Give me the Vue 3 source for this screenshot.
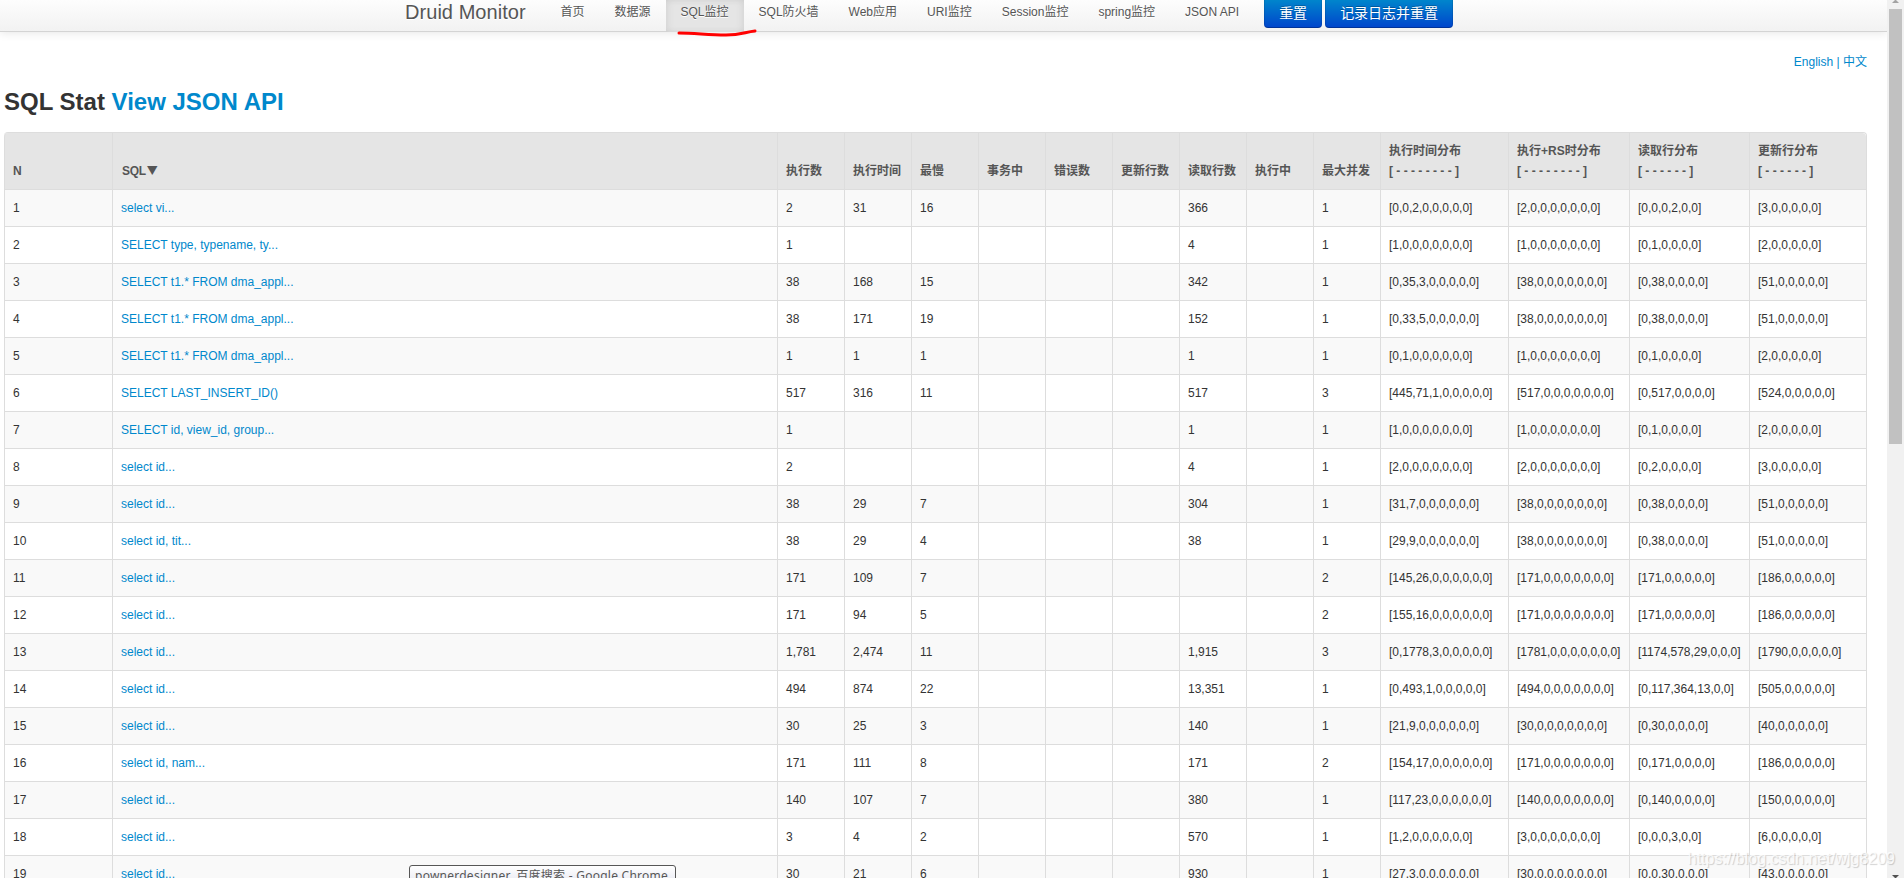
<template>
  <div class="window">
    <div class="page">
      <div class="navbar">
        <div class="navbar-inner">
          <a class="brand">Druid Monitor</a>
          <ul class="nav">
            <li v-for="item in menu" :key="item" :class="{ active: item === current }">
              <a>{{ item }}</a>
            </li>
          </ul>
          <div class="actions">
            <button type="button" class="btn">重置</button>
            <button type="button" class="btn">记录日志并重置</button>
          </div>
        </div>
      </div>

      <div class="container">
        <div class="lang"><a>English</a> | <a>中文</a></div>
        <h3>SQL Stat <a>View JSON API</a></h3>

        <table class="table">
          <colgroup>
            <col class="col-n">
            <col class="col-sql">
            <col v-for="n in 9" :key="n" class="col-num">
            <col class="col-time">
            <col class="col-rs">
            <col class="col-fetch">
            <col class="col-update">
          </colgroup>
          <thead>
            <tr>
              <th>N</th>
              <th class="sorted">SQL<span class="sort">▼</span></th>
              <th v-for="name in numberHeads" :key="name">{{ name }}</th>
              <th v-for="head in histogramHeads" :key="head.name">
                {{ head.name }}<br>{{ head.range }}
              </th>
            </tr>
          </thead>
          <tbody>
            <tr v-for="(row, i) in rows" :key="i">
              <td>{{ i + 1 }}</td>
              <td><a>{{ row[0] }}</a></td>
              <td>{{ row[1] }}</td>
              <td>{{ row[2] }}</td>
              <td>{{ row[3] }}</td>
              <td></td>
              <td></td>
              <td></td>
              <td>{{ row[4] }}</td>
              <td></td>
              <td>{{ row[5] }}</td>
              <td>[{{ row[6] }}]</td>
              <td>[{{ row[7] }}]</td>
              <td>[{{ row[8] }}]</td>
              <td>[{{ row[9] }}]</td>
            </tr>
          </tbody>
        </table>
      </div>
    </div>

    <div class="scrollbar">
      <svg class="arrow" width="17" height="9" viewBox="0 0 17 9">
        <path d="M5 3h7L8.500 -0.500z" fill="#a3a3a3" />
      </svg>
      <div class="thumb"></div>
      <svg class="arrow down" width="17" height="3" viewBox="0 0 17 3">
        <path d="M5 0h7L8.500 3.500z" fill="#505050" />
      </svg>
    </div>

    <svg class="marker" width="90" height="14" viewBox="0 0 90 14">
      <path d="M4 5C20 5 33 7 51 7C66 7 70 4 80 3" />
    </svg>
    <div class="tooltip">pownerdesigner_百度搜索 - Google Chrome</div>
    <div class="watermark">https://blog.csdn.net/wjg8209</div>
  </div>
</template>

<script setup>
import { ref } from 'vue'

const current = ref('SQL监控')

const menu = [
  '首页',
  '数据源',
  'SQL监控',
  'SQL防火墙',
  'Web应用',
  'URI监控',
  'Session监控',
  'spring监控',
  'JSON API'
]

const numberHeads = [
  '执行数',
  '执行时间',
  '最慢',
  '事务中',
  '错误数',
  '更新行数',
  '读取行数',
  '执行中',
  '最大并发'
]

const histogramHeads = [
  { name: '执行时间分布', range: '[ - - - - - - - - ]' },
  { name: '执行+RS时分布', range: '[ - - - - - - - - ]' },
  { name: '读取行分布', range: '[ - - - - - - ]' },
  { name: '更新行分布', range: '[ - - - - - - ]' }
]

// sql, executions, total time, slowest, fetched rows, max concurrent, histograms
const rows = [
  ['select vi...', '2', '31', '16', '366', '1', '0,0,2,0,0,0,0,0', '2,0,0,0,0,0,0,0', '0,0,0,2,0,0', '3,0,0,0,0,0'],
  ['SELECT type, typename, ty...', '1', '', '', '4', '1', '1,0,0,0,0,0,0,0', '1,0,0,0,0,0,0,0', '0,1,0,0,0,0', '2,0,0,0,0,0'],
  ['SELECT t1.* FROM dma_appl...', '38', '168', '15', '342', '1', '0,35,3,0,0,0,0,0', '38,0,0,0,0,0,0,0', '0,38,0,0,0,0', '51,0,0,0,0,0'],
  ['SELECT t1.* FROM dma_appl...', '38', '171', '19', '152', '1', '0,33,5,0,0,0,0,0', '38,0,0,0,0,0,0,0', '0,38,0,0,0,0', '51,0,0,0,0,0'],
  ['SELECT t1.* FROM dma_appl...', '1', '1', '1', '1', '1', '0,1,0,0,0,0,0,0', '1,0,0,0,0,0,0,0', '0,1,0,0,0,0', '2,0,0,0,0,0'],
  ['SELECT LAST_INSERT_ID()', '517', '316', '11', '517', '3', '445,71,1,0,0,0,0,0', '517,0,0,0,0,0,0,0', '0,517,0,0,0,0', '524,0,0,0,0,0'],
  ['SELECT id, view_id, group...', '1', '', '', '1', '1', '1,0,0,0,0,0,0,0', '1,0,0,0,0,0,0,0', '0,1,0,0,0,0', '2,0,0,0,0,0'],
  ['select id...', '2', '', '', '4', '1', '2,0,0,0,0,0,0,0', '2,0,0,0,0,0,0,0', '0,2,0,0,0,0', '3,0,0,0,0,0'],
  ['select id...', '38', '29', '7', '304', '1', '31,7,0,0,0,0,0,0', '38,0,0,0,0,0,0,0', '0,38,0,0,0,0', '51,0,0,0,0,0'],
  ['select id, tit...', '38', '29', '4', '38', '1', '29,9,0,0,0,0,0,0', '38,0,0,0,0,0,0,0', '0,38,0,0,0,0', '51,0,0,0,0,0'],
  ['select id...', '171', '109', '7', '', '2', '145,26,0,0,0,0,0,0', '171,0,0,0,0,0,0,0', '171,0,0,0,0,0', '186,0,0,0,0,0'],
  ['select id...', '171', '94', '5', '', '2', '155,16,0,0,0,0,0,0', '171,0,0,0,0,0,0,0', '171,0,0,0,0,0', '186,0,0,0,0,0'],
  ['select id...', '1,781', '2,474', '11', '1,915', '3', '0,1778,3,0,0,0,0,0', '1781,0,0,0,0,0,0,0', '1174,578,29,0,0,0', '1790,0,0,0,0,0'],
  ['select id...', '494', '874', '22', '13,351', '1', '0,493,1,0,0,0,0,0', '494,0,0,0,0,0,0,0', '0,117,364,13,0,0', '505,0,0,0,0,0'],
  ['select id...', '30', '25', '3', '140', '1', '21,9,0,0,0,0,0,0', '30,0,0,0,0,0,0,0', '0,30,0,0,0,0', '40,0,0,0,0,0'],
  ['select id, nam...', '171', '111', '8', '171', '2', '154,17,0,0,0,0,0,0', '171,0,0,0,0,0,0,0', '0,171,0,0,0,0', '186,0,0,0,0,0'],
  ['select id...', '140', '107', '7', '380', '1', '117,23,0,0,0,0,0,0', '140,0,0,0,0,0,0,0', '0,140,0,0,0,0', '150,0,0,0,0,0'],
  ['select id...', '3', '4', '2', '570', '1', '1,2,0,0,0,0,0,0', '3,0,0,0,0,0,0,0', '0,0,0,3,0,0', '6,0,0,0,0,0'],
  ['select id...', '30', '21', '6', '930', '1', '27,3,0,0,0,0,0,0', '30,0,0,0,0,0,0,0', '0,0,30,0,0,0', '43,0,0,0,0,0']
]
</script>

<style>
body {
  margin: 0;
  overflow: hidden;
}
</style>

<style scoped>
* {
  box-sizing: border-box;
}

.window {
  position: relative;
  display: flex;
  height: 878px;
  overflow: hidden;
  background: #fff;
  color: #333;
  font-family: "Liberation Sans", Arial, "Noto Sans CJK SC", sans-serif;
  font-size: 12px;
  line-height: 20px;
}

.page {
  flex: 1;
  min-width: 0;
  height: 878px;
  overflow: hidden;
}

a {
  color: #0088cc;
  text-decoration: none;
}

/* top bar */
.navbar {
  height: 32px;
  border-bottom: 1px solid #d4d4d4;
  background: linear-gradient(to bottom, #fdfdfd, #f2f2f2);
  box-shadow: 0 1px 10px rgba(0, 0, 0, 0.1);
}

.navbar-inner {
  display: flex;
  height: 31px;
  padding-left: 405px;
}

.brand {
  width: 140.500px;
  height: 31px;
  padding-top: 2px;
  color: #555;
  font-size: 20px;
  letter-spacing: 0.050px;
  white-space: nowrap;
  text-shadow: 0 1px 0 #fff;
}

.nav {
  display: flex;
  margin: 0;
  padding: 0;
  list-style: none;
}

.nav a {
  display: block;
  height: 31px;
  padding: 2px 15px 0;
  color: #555;
  white-space: nowrap;
  text-shadow: 0 1px 0 #fff;
}

.nav .active a {
  height: 32px;
  background: #e5e5e5;
  box-shadow: inset 3px 0 8px -2px rgba(0, 0, 0, 0.08), inset -3px 0 8px -2px rgba(0, 0, 0, 0.08);
}

.actions {
  display: flex;
  gap: 3px;
  margin-left: 10px;
}

.btn {
  height: 28px;
  padding: 0 14px 2px;
  border: 1px solid #0044cc;
  border-top: 0;
  border-color: rgba(0, 0, 0, 0.1) rgba(0, 0, 0, 0.1) rgba(0, 0, 0, 0.25);
  border-radius: 0 0 4px 4px;
  background: linear-gradient(to bottom, #0085cc, #0044cc) border-box;
  color: #fff;
  font-family: inherit;
  font-size: 14px;
  line-height: 20px;
  white-space: nowrap;
  text-shadow: 0 -1px 0 rgba(0, 0, 0, 0.25);
}

/* content */
.container {
  padding: 20px 20px 0 4px;
}

.lang {
  height: 20px;
  color: #0088cc;
  text-align: right;
}

h3 {
  margin: 10px 0;
  font-size: 24px;
  font-weight: bold;
  line-height: 40px;
}

.table {
  width: 1863px;
  table-layout: fixed;
  border: 1px solid #ddd;
  border-left: 0;
  border-collapse: separate;
  border-spacing: 0;
  border-radius: 4px;
}

.col-n {
  width: 108px;
}

.col-sql {
  width: 665px;
}

.col-num {
  width: 67px;
}

.col-time {
  width: 128px;
}

.col-rs {
  width: 121px;
}

.col-fetch {
  width: 120px;
}

.col-update {
  width: 117px;
}

th,
td {
  padding: 8px;
  border-left: 1px solid #ddd;
  text-align: left;
  white-space: nowrap;
}

th {
  height: 56px;
  padding-right: 0;
  background: #e5e5e5;
  color: #555;
  font-weight: bold;
  vertical-align: bottom;
}

th:first-child {
  border-top-left-radius: 4px;
}

th:last-child {
  border-top-right-radius: 4px;
}

.sorted {
  padding-left: 9px;
  letter-spacing: -0.300px;
}

.sort {
  margin-left: 1px;
  font-family: "Noto Sans CJK SC", sans-serif;
  font-size: 11px;
  line-height: 1;
}

td {
  height: 37px;
  padding-right: 0;
  border-top: 1px solid #ddd;
  vertical-align: top;
}

tbody tr:nth-child(odd) td {
  background: #f9f9f9;
}

/* browser scrollbar */
.scrollbar {
  display: flex;
  flex-direction: column;
  width: 17px;
  height: 878px;
  background: #f1f1f1;
}

.arrow {
  display: block;
  flex: none;
}

.down {
  margin-top: auto;
}

.thumb {
  width: 13px;
  height: 435px;
  margin-left: 2px;
  background: #c1c1c1;
}

/* overlays */
.marker {
  position: absolute;
  left: 675px;
  top: 28px;
}

.marker path {
  fill: none;
  stroke: #f00;
  stroke-width: 3;
  stroke-linecap: round;
}

.tooltip {
  position: absolute;
  left: 409px;
  top: 865px;
  width: 267px;
  height: 22px;
  padding-left: 5px;
  border: 1px solid #575757;
  border-radius: 3px;
  background: linear-gradient(to bottom, #fff, #e4e5f0);
  color: #575757;
  font-family: "Noto Sans", "Noto Sans CJK SC", sans-serif;
  letter-spacing: 0.250px;
  white-space: nowrap;
}

.watermark {
  position: absolute;
  right: 9px;
  top: 849px;
  color: rgba(255, 255, 255, 0.8);
  font-size: 16px;
  text-shadow: 1px 1px 1px rgba(0, 0, 0, 0.18);
  white-space: nowrap;
}
</style>
